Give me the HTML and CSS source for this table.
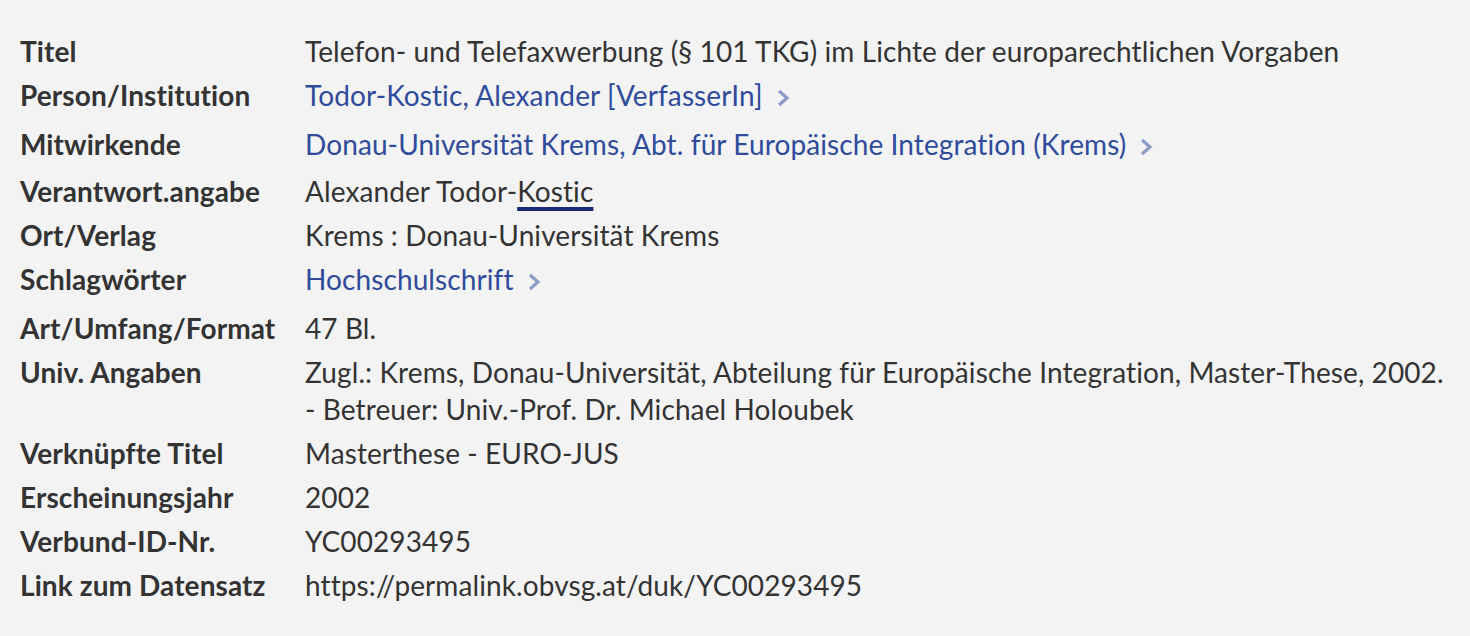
FILE: index.html
```html
<!DOCTYPE html>
<html lang="de">
<head>
    <meta charset="UTF-8">
    <meta name="viewport" content="width=device-width, initial-scale=1.0">
    <title>Titelanzeige</title>
    <link rel="stylesheet" href="styles.css">
</head>
<body>
    <dl class="record">
        <div class="row">
            <dt>Titel</dt>
            <dd>Telefon- und Telefaxwerbung (§ 101 TKG) im Lichte der europarechtlichen Vorgaben</dd>
        </div>
        <div class="row has-link">
            <dt>Person/Institution</dt>
            <dd><a href="#">Todor-Kostic, Alexander [VerfasserIn]<svg class="chevron" viewBox="0 0 14 20" width="14" height="20"><polyline points="3,3 11,10 3,17"/></svg></a></dd>
        </div>
        <div class="row has-link short">
            <dt>Mitwirkende</dt>
            <dd><a href="#">Donau-Universität Krems, Abt. für Europäische Integration (Krems)<svg class="chevron" viewBox="0 0 14 20" width="14" height="20"><polyline points="3,3 11,10 3,17"/></svg></a></dd>
        </div>
        <div class="row">
            <dt>Verantwort.angabe</dt>
            <dd>Alexander Todor-<span class="mark">Kostic</span></dd>
        </div>
        <div class="row">
            <dt>Ort/Verlag</dt>
            <dd>Krems : Donau-Universität Krems</dd>
        </div>
        <div class="row has-link">
            <dt>Schlagwörter</dt>
            <dd><a href="#">Hochschulschrift<svg class="chevron" viewBox="0 0 14 20" width="14" height="20"><polyline points="3,3 11,10 3,17"/></svg></a></dd>
        </div>
        <div class="row">
            <dt>Art/Umfang/Format</dt>
            <dd>47 Bl.</dd>
        </div>
        <div class="row">
            <dt>Univ. Angaben</dt>
            <dd>Zugl.: Krems, Donau-Universität, Abteilung für Europäische Integration, Master-These, 2002.<br>- Betreuer: Univ.-Prof. Dr. Michael Holoubek</dd>
        </div>
        <div class="row">
            <dt>Verknüpfte Titel</dt>
            <dd>Masterthese - EURO-JUS</dd>
        </div>
        <div class="row">
            <dt>Erscheinungsjahr</dt>
            <dd>2002</dd>
        </div>
        <div class="row">
            <dt>Verbund-ID-Nr.</dt>
            <dd>YC00293495</dd>
        </div>
        <div class="row">
            <dt>Link zum Datensatz</dt>
            <dd>https://permalink.obvsg.at/duk/YC00293495</dd>
        </div>
    </dl>
</body>
</html>
```
FILE: styles.css
```css
body {
    margin: 0;
    background-color: #f3f3f3;
    color: #333333;
    font-family: Lato, "Open Sans", sans-serif;
    font-size: 28px;
    letter-spacing: 0.1px;
}
.record {
    margin: 0;
    padding: 30px 20px 0 20px;
}
.row {
    display: grid;
    grid-template-columns: 285px 1fr;
    line-height: 37px;
    padding: 3px 0 4px 0;
}
.row.has-link {
    padding-bottom: 9px;
}
.row.short {
    padding-bottom: 7px;
}
.row dt {
    font-weight: 700;
}
.row dd {
    margin: 0;
}
.row a {
    color: #2f4b9c;
    text-decoration: none;
}
.chevron {
    margin-left: 13px;
    vertical-align: -2px;
    fill: none;
    stroke: #8d9cc7;
    stroke-width: 3.2;
}
.mark {
    text-decoration: underline;
    text-decoration-color: #1b2a78;
    text-decoration-thickness: 4px;
    text-underline-offset: 5px;
}
```
